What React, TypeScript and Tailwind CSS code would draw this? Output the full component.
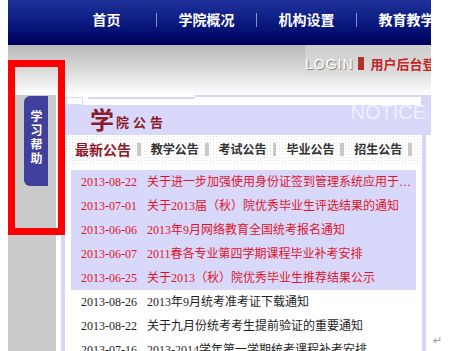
import React from "react";

const navItems = ["首页", "学院概况", "机构设置", "教育教学"];
const tabs = ["教学公告", "考试公告", "毕业公告", "招生公告"];
const rows = [
  { d: "2013-08-22", t: "关于进一步加强使用身份证签到管理系统应用于…", hi: true },
  { d: "2013-07-01", t: "关于2013届（秋）院优秀毕业生评选结果的通知", hi: true },
  { d: "2013-06-06", t: "2013年9月网络教育全国统考报名通知", hi: true },
  { d: "2013-06-07", t: "2011春各专业第四学期课程毕业补考安排", hi: true },
  { d: "2013-06-25", t: "关于2013（秋）院优秀毕业生推荐结果公示", hi: true },
  { d: "2013-08-26", t: "2013年9月统考准考证下载通知", hi: false },
  { d: "2013-08-22", t: "关于九月份统考考生提前验证的重要通知", hi: false },
  { d: "2013-07-16", t: "2013-2014学年第一学期统考课程补考安排", hi: false },
];

function Sep() {
  return <span className="mx-[6px] mr-[10px] inline-block w-[4px] h-[13px] bg-[#c8c8c8]" />;
}

export default function App() {
  return (
    <div className="relative w-[472px] h-[351px] overflow-hidden bg-white font-['Noto_Sans_CJK_SC',sans-serif]">
      <div className="ml-[8px] w-[423px] h-full overflow-hidden flex flex-col">
        {/* nav */}
        <div className="h-[45px] shrink-0 bg-linear-to-b from-[#1f319a] via-[#0b1a80] to-[#00005c] flex items-start pt-[10px] pl-[49px] whitespace-nowrap">
          {navItems.map((n, i) => (
            <React.Fragment key={n}>
              <span className="w-[99px] text-center text-white font-bold text-[14px] leading-[18px] shrink-0">{n}</span>
              {i < navItems.length - 1 && <span className="w-px h-[14px] mt-[3px] bg-[#8a92c8] shrink-0" />}
            </React.Fragment>
          ))}
        </div>
        {/* gradient strip with login */}
        <div className="h-[50px] shrink-0 bg-linear-to-b from-[#b9b9b9] via-[#dadada] to-white flex items-start">
          <div className="ml-[297px] h-[30px] flex-1 bg-linear-to-b from-[#cdcdcd] to-[#dedede] flex items-start pt-[11px] whitespace-nowrap">
            <span className="font-['Liberation_Sans',sans-serif] text-[14px] leading-[16px] tracking-[1px] text-white [text-shadow:1px_1px_1px_#7a7a7a]">LOGIN</span>
            <span className="ml-[4px] w-[6px] h-[13px] mt-[1px] bg-[#b3302c] shrink-0" />
            <span className="ml-[7px] text-[13px] leading-[16px] font-bold text-[#c0282a]">用户后台登录</span>
          </div>
        </div>
        {/* body */}
        <div className="flex flex-1 min-h-0">
          <div className="w-[48px] shrink-0 bg-[#cbcbcb] pt-[1px] pl-[16px]">
            <div className="w-[24px] h-[90px] rounded-l-[6px] bg-[#40409c] pt-[14px] flex justify-center">
              <span className="[writing-mode:vertical-rl] text-white font-bold text-[12px] leading-[14px] tracking-[2px]">学习帮助</span>
            </div>
          </div>
          <div className="w-[5px] shrink-0" />
          <div className="flex-1 border-l-4 border-[#d6d6f6] flex flex-col min-w-0">
            {/* decorative top band */}
            <div className="h-[10px] shrink-0 flex items-start">
              <div className="w-[17px] h-[8px] mt-[2px] ml-[1px] border border-[#dcdcf6] bg-white" />
              <div className="w-[5px]" />
              <div className="w-[107px] h-[2px] mt-[2px] bg-[#d6d6f6]" />
              <div className="w-[226px] h-[10px] border-t-2 border-[#d6d6f6] bg-white" />
              <div className="flex-1 h-[10px] bg-[#d6d6f6]" />
            </div>
            {/* header */}
            <div className="h-[30px] shrink-0 bg-[#d8d8fa] flex justify-between pl-[25px] pr-[5px]">
              <div className="flex items-end pb-[3px] text-[#8b1a2c] font-bold">
                <span className="text-[24px] leading-[26px]">学</span>
                <span className="ml-[2px] mb-[2px] text-[13px] leading-[16px] tracking-[4px]">院公告</span>
              </div>
              <span className="self-start mt-[-3px] font-['Liberation_Sans',sans-serif] text-[20px] leading-[20px] text-[#f0f0ff]">NOTICE</span>
            </div>
            {/* below header with right border */}
            <div className="flex-1 w-[361px] border-r-4 border-[#d6d6f6] flex flex-col">
              <div className="h-[30px] shrink-0 flex items-center pl-[10px] pb-[2px] whitespace-nowrap bg-[radial-gradient(circle,#e4e4e4_0.7px,transparent_0.9px)] bg-[length:3px_3px]">
                <span className="text-[14px] font-bold text-[#8b1a2c] leading-[18px]">最新公告</span>
                <Sep />
                {tabs.map((t) => (
                  <React.Fragment key={t}>
                    <span className="text-[12px] font-bold text-[#333] leading-[16px]">{t}</span>
                    <Sep />
                  </React.Fragment>
                ))}
              </div>
              <div className="mt-[5px] mx-[6px] font-['Liberation_Serif','Noto_Sans_CJK_SC',serif] text-[12px]">
                {rows.map((r, i) => (
                  <div
                    key={i}
                    className={
                      "h-[24px] flex items-center pl-[10px] whitespace-nowrap overflow-hidden " +
                      (r.hi ? "bg-[#d8d8fa] text-[#e0142c]" : "text-[#1e1e1e]")
                    }
                  >
                    <span className="w-[56px] shrink-0">{r.d}</span>
                    <span className="ml-[10px]">{r.t}</span>
                  </div>
                ))}
              </div>
            </div>
          </div>
        </div>
      </div>
      {/* red highlight annotation */}
      <div className="absolute left-[8px] top-[60px] w-[57px] h-[175px] border-[7px] border-[#ff0000]" />
      {/* paragraph mark */}
      <span className="absolute left-[433px] top-[333px] text-[11px] leading-[12px] text-[#9a9a9a]">↵</span>
    </div>
  );
}
